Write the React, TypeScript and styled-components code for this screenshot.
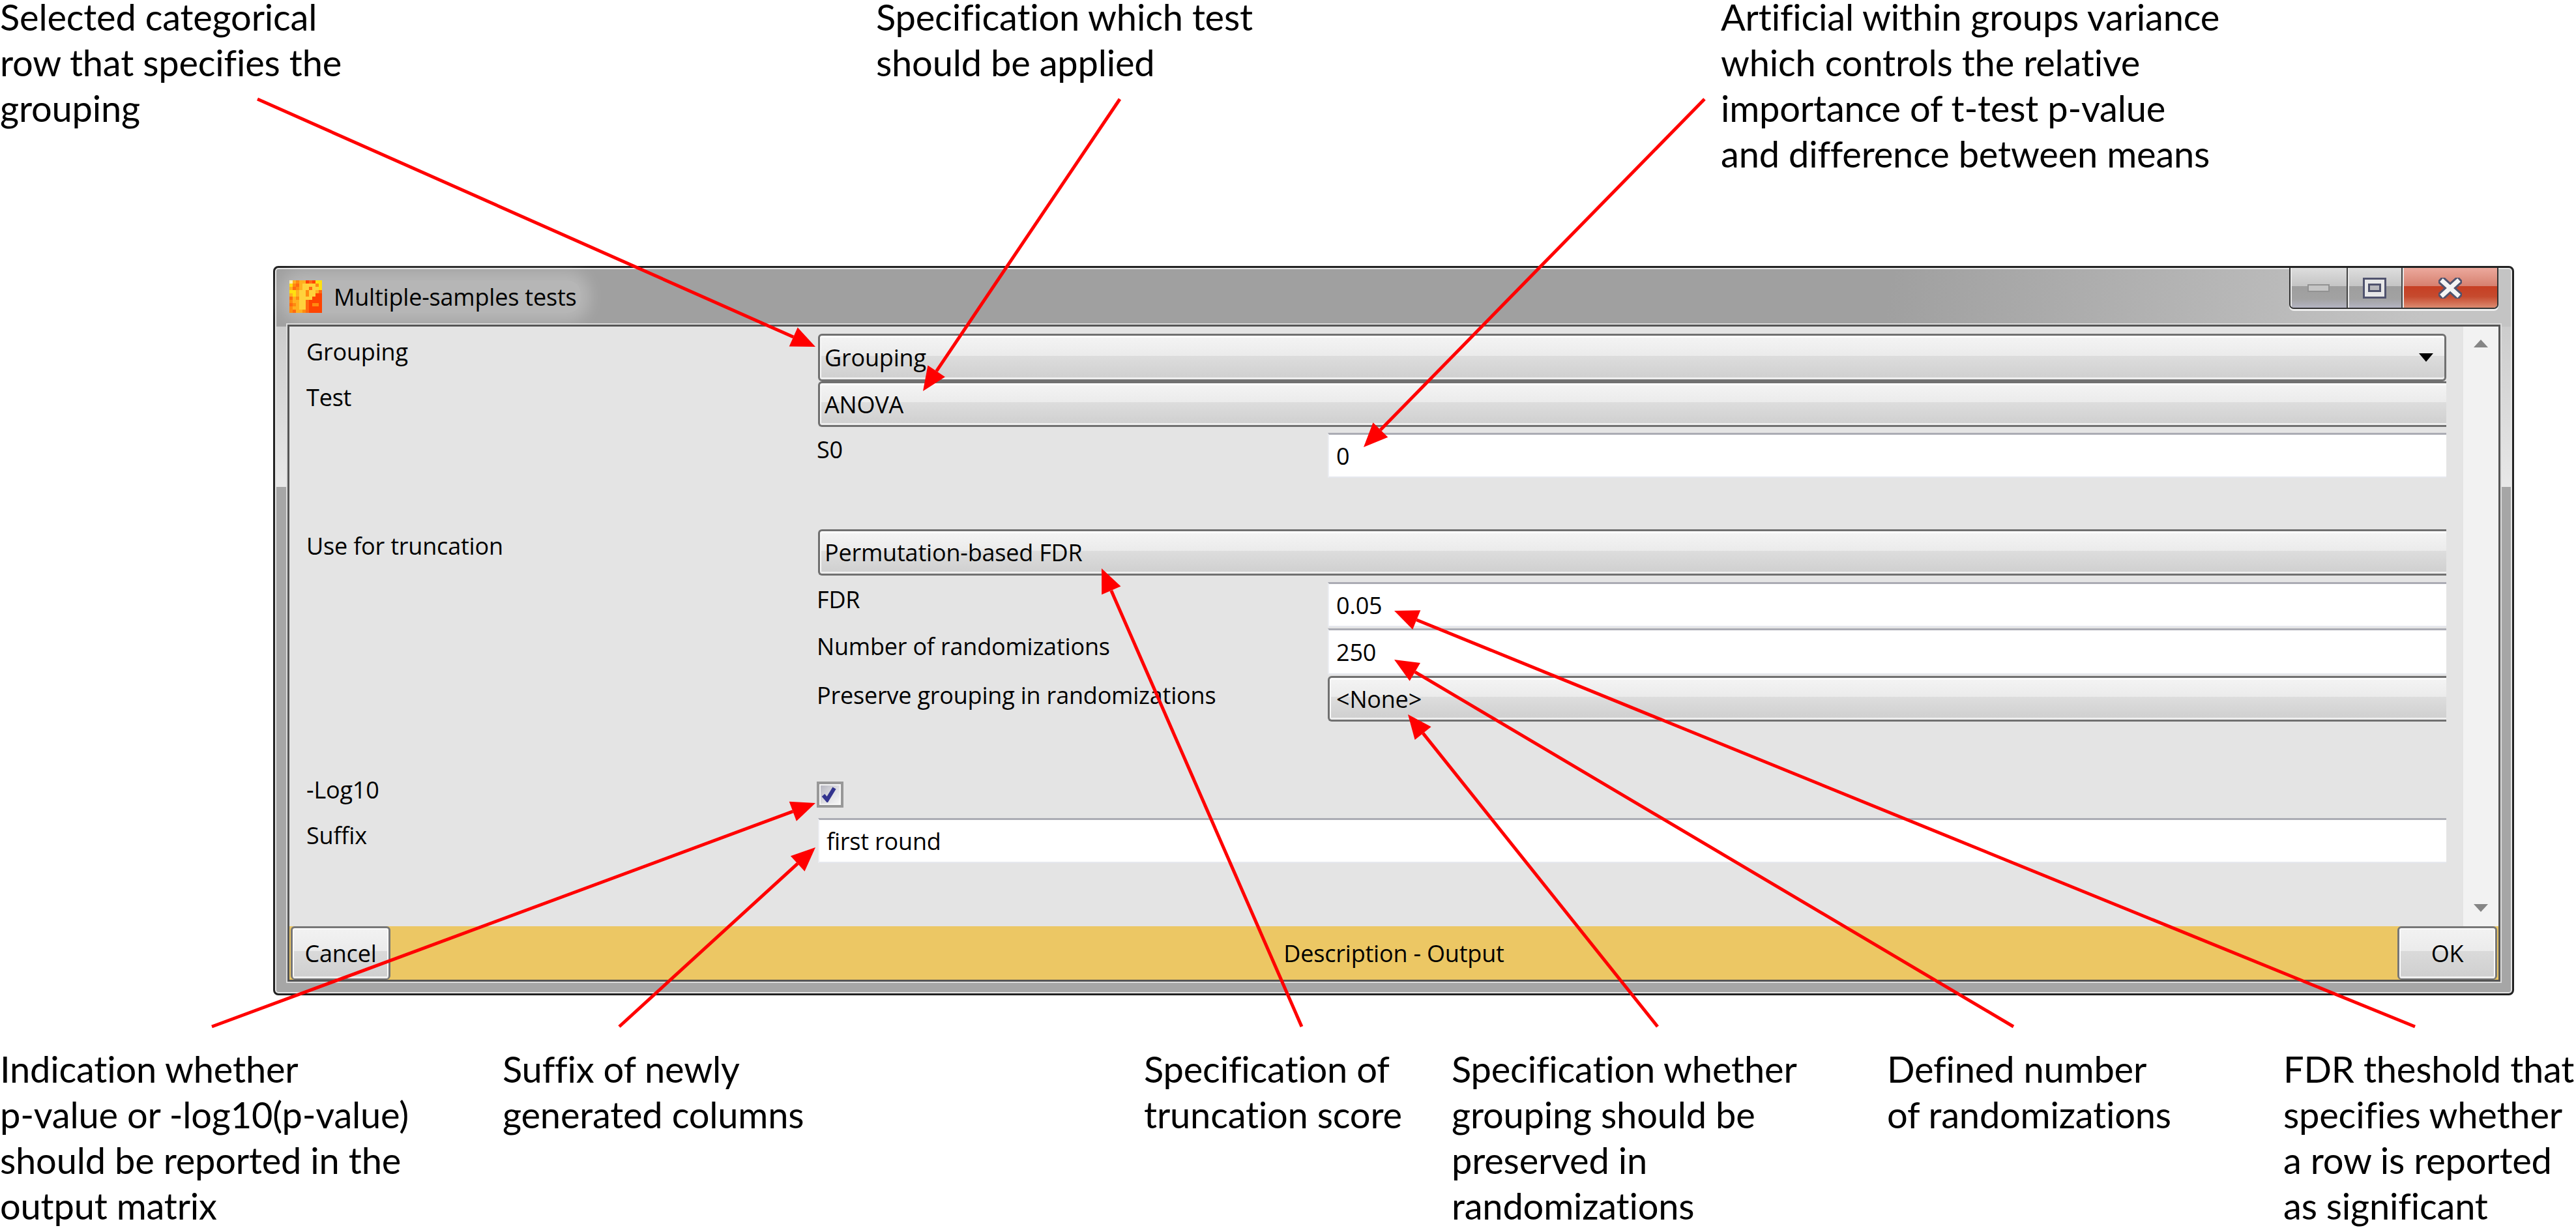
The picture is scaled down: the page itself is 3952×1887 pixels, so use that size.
import React from 'react';
import styled, { createGlobalStyle } from 'styled-components';

const GlobalStyle = createGlobalStyle`
  html, body {
    margin: 0;
    padding: 0;
    background: #fff;
  }
`;

const Page = styled.div`
  position: relative;
  display: flex;
  flex-direction: column;
  width: 3952px;
  height: 1887px;
  overflow: hidden;
  background: #fff;
`;

const TopNotes = styled.div`
  display: grid;
  grid-template-columns: 1344px 1296px 1fr;
  height: 408px;
`;

const BottomNotes = styled.div`
  display: grid;
  grid-template-columns: 771px 984px 472px 668px 608px 1fr;
  margin-top: 87px;
`;

const NoteBlock = styled.div`
  display: flex;
  flex-direction: column;
  gap: 18px;
`;

const NoteLine = styled.div`
  font-family: Lato, 'Open Sans', sans-serif;
  font-size: 56px;
  line-height: 52px;
  letter-spacing: -0.2px;
  color: #000;
  white-space: nowrap;
`;

const Window = styled.div`
  display: flex;
  flex-direction: column;
  box-sizing: border-box;
  width: 3438px;
  height: 1119px;
  margin-left: 419px;
  padding: 0 18px 18px 19px;
  border: 3px solid #222;
  border-radius: 8px;
  box-shadow: inset 0 0 0 2px #e6e6e6;
  background-color: #a2a2a2;
  background-image:
    linear-gradient(100deg, #a0a0a0 72%, #c4c4c4 96%),
    linear-gradient(to bottom, #c2c2c2 0, #e8e8e8 336px, #a6a6a6 336px);
  background-size: 100% 90px, 100% 100%;
  background-repeat: no-repeat;
`;

const TitleBar = styled.div`
  display: flex;
  justify-content: space-between;
  align-items: flex-start;
  flex: none;
  height: 87px;
`;

const TitleGroup = styled.div`
  display: flex;
  align-items: center;
  gap: 18px;
  margin: 19px 0 0 3px;
  height: 50px;
  padding-right: 6px;
  border-radius: 20px;
  background: rgba(255, 255, 255, 0.24);
  box-shadow: 0 0 22px 14px rgba(255, 255, 255, 0.24);
`;

const TitleText = styled.span`
  font-family: 'Open Sans', sans-serif;
  font-size: 36px;
  letter-spacing: -0.2px;
  color: #000;
  white-space: nowrap;
`;

const Controls = styled.div`
  display: flex;
  margin-right: 3px;
  height: 61px;
  border: 2px solid #333;
  border-top: none;
  border-radius: 0 0 7px 7px;
  overflow: hidden;
  box-shadow: 0 3px 0 #eee;
`;

const ControlButton = styled.div<{ $width: number; $close?: boolean }>`
  display: flex;
  align-items: center;
  justify-content: center;
  box-sizing: border-box;
  width: ${({ $width }) => $width}px;
  border-right: 2px solid #444;
  background: ${({ $close }) =>
    $close
      ? 'linear-gradient(to bottom, #eca99d 0, #d6806f 46%, #c63f24 46%, #c64a2e 72%, #dc8a70 100%)'
      : 'linear-gradient(to bottom, #dedede 0, #c4c4c4 46%, #9e9e9e 46%, #a2a2a2 78%, #b4b4c2 100%)'};
  box-shadow: inset 2px 0 0 #e8e8e8;

  &:last-child {
    border-right: none;
  }
`;

const Body = styled.div`
  display: flex;
  flex-direction: column;
  flex: 1;
  min-height: 0;
  border: 3px solid #555;
  background: #e4e4e4;
  box-shadow: 0 0 0 2px #dcdcdc;
`;

const Main = styled.div`
  display: flex;
  flex: 1;
  min-height: 0;
`;

const Form = styled.div`
  display: flex;
  flex-direction: column;
  flex: 1;
  padding: 11px 26px 0 26px;
`;

const Row = styled.div<{ $gap?: number; $height: number; $nested?: boolean }>`
  display: grid;
  grid-template-columns: ${({ $nested }) => ($nested ? '784px 1fr' : '785px 1fr')};
  height: ${({ $height }) => $height}px;
  margin-top: ${({ $gap }) => $gap ?? 0}px;
  margin-left: ${({ $nested }) => ($nested ? '783px' : '0')};
`;

const Label = styled.div<{ $top: number }>`
  margin-top: ${({ $top }) => $top}px;
  font-family: 'Open Sans', sans-serif;
  font-size: 36px;
  line-height: 40px;
  letter-spacing: -0.2px;
  color: #000;
  white-space: nowrap;
`;

const Combo = styled.div<{ $closed?: boolean; $inset?: number }>`
  display: flex;
  align-items: center;
  justify-content: space-between;
  box-sizing: border-box;
  height: 100%;
  padding: 0 17px 0 ${({ $inset }) => $inset ?? 7}px;
  border: 3px solid #707070;
  border-right-width: ${({ $closed }) => ($closed ? '3px' : '0')};
  border-radius: ${({ $closed }) => ($closed ? '6px' : '6px 0 0 6px')};
  background: linear-gradient(to bottom, #f4f4f4 0, #ebebeb 46%, #dddddd 46%, #cfcfcf 100%);
  box-shadow: inset 0 3px 0 #fcfcfc, inset 0 -3px 0 #eeeeee, inset 2px 0 0 #f8f8f8;
  font-family: 'Open Sans', sans-serif;
  font-size: 36px;
  letter-spacing: -0.2px;
  color: #000;
  white-space: nowrap;
`;

const ComboArrow = styled.span`
  width: 0;
  height: 0;
  border-left: 11px solid transparent;
  border-right: 11px solid transparent;
  border-top: 13px solid #000;
`;

const TextField = styled.div`
  display: flex;
  align-items: center;
  box-sizing: border-box;
  height: 100%;
  padding-left: 11px;
  border-top: 3px solid #abacb4;
  border-left: 2px solid #eceef2;
  border-bottom: 2px solid #e6e8ee;
  background: #fff;
  font-family: 'Open Sans', sans-serif;
  font-size: 36px;
  letter-spacing: -0.2px;
  color: #000;
`;

const CheckBox = styled.div`
  box-sizing: border-box;
  width: 41px;
  height: 40px;
  margin-left: -2px;
  padding: 2px;
  border: 4px solid #989898;
  background: #f6f6f6;
`;

const CheckFill = styled.div`
  display: flex;
  height: 100%;
  background: linear-gradient(135deg, #b6b6c0 0, #e0e0e4 55%, #f6f6f6 100%);
`;

const ScrollBar = styled.div`
  display: flex;
  flex-direction: column;
  align-items: center;
  justify-content: space-between;
  flex: none;
  box-sizing: border-box;
  width: 54px;
  padding: 20px 0 22px;
  background: #f2f2f2;
`;

const ScrollArrow = styled.span<{ $up?: boolean }>`
  width: 0;
  height: 0;
  border-left: 11px solid transparent;
  border-right: 11px solid transparent;
  ${({ $up }) =>
    $up ? 'border-bottom: 12px solid #858585;' : 'border-top: 12px solid #858585;'}
`;

const StatusBar = styled.div`
  display: flex;
  align-items: stretch;
  flex: none;
  height: 82px;
  padding: 0 2px;
  background: #ecc764;
`;

const StatusText = styled.div`
  display: flex;
  align-items: center;
  justify-content: center;
  flex: 1;
  font-family: 'Open Sans', sans-serif;
  font-size: 36px;
  letter-spacing: -0.2px;
  color: #000;
`;

const Button = styled.div`
  display: flex;
  align-items: center;
  justify-content: center;
  box-sizing: border-box;
  width: 153px;
  border: 3px solid #777;
  border-bottom-width: 2px;
  border-radius: 6px;
  background: linear-gradient(to bottom, #f2f2f2 0, #ebebeb 46%, #dadada 46%, #cfcfcf 100%);
  box-shadow: inset 0 2px 0 #fcfcfc, inset 0 -3px 0 #f0f0f0, inset 2px 0 0 #fafafa, inset -2px 0 0 #fafafa;
  font-family: 'Open Sans', sans-serif;
  font-size: 36px;
  letter-spacing: -0.2px;
  color: #000;
`;

const ArrowLayer = styled.svg`
  position: absolute;
  top: 0;
  left: 0;
  pointer-events: none;
`;

const LOGO_COLORS: Record<string, string> = {
  w: '#ffeeaa',
  a: '#ffb020',
  o: '#ff8a10',
  m: '#ff6a10',
  r: '#ff4400',
  y: '#ffe010',
  p: '#ffd23c',
};

const LOGO_ROWS = [
  'waoaarmryy',
  'yomappppoy',
  'amoappmppy',
  'yyappoppam',
  'ayappopprr',
  'maopppprrr',
  'oaappmrrrr',
  'moappmroor',
  'oaappmrrrr',
  'omaaomrrrr',
];

const Logo = () => (
  <svg width={50} height={50} viewBox="0 0 10 10" shapeRendering="crispEdges">
    {LOGO_ROWS.map((row, y) =>
      row.split('').map((c, x) => (
        <rect key={`${x}-${y}`} x={x} y={y} width={1} height={1} fill={LOGO_COLORS[c]} />
      )),
    )}
  </svg>
);

const MinimizeIcon = () => (
  <svg width={34} height={12} viewBox="0 0 34 12">
    <rect x={1} y={1} width={32} height={10} fill="#c6c6c6" stroke="#929292" strokeWidth={2} />
  </svg>
);

const MaximizeIcon = () => (
  <svg width={36} height={32} viewBox="0 0 36 32">
    <rect x={1.5} y={1.5} width={33} height={29} fill="#e8e8e8" stroke="#50536e" strokeWidth={3} />
    <rect x={9.5} y={10.5} width={17} height={10} fill="#b8b8bc" stroke="#50536e" strokeWidth={3} />
  </svg>
);

const CloseIcon = () => (
  <svg width={36} height={32} viewBox="0 0 36 32">
    <path d="M7 6 L29 26 M29 6 L7 26" stroke="#50536e" strokeWidth={13} strokeLinecap="square" />
    <path d="M7 6 L29 26 M29 6 L7 26" stroke="#f4f4f4" strokeWidth={7} strokeLinecap="square" />
  </svg>
);

const CheckMark = () => (
  <svg width={25} height={26} viewBox="0 0 25 26">
    <path d="M4 15 L10 22 L21 4" fill="none" stroke="#33348f" strokeWidth={6} />
  </svg>
);

type ArrowProps = { x1: number; y1: number; x2: number; y2: number };

const Arrow = ({ x1, y1, x2, y2 }: ArrowProps) => {
  const len = Math.hypot(x2 - x1, y2 - y1);
  const ux = (x2 - x1) / len;
  const uy = (y2 - y1) / len;
  const bx = x2 - ux * 37;
  const by = y2 - uy * 37;
  const px = -uy * 16;
  const py = ux * 16;
  return (
    <g>
      <line x1={x1} y1={y1} x2={bx} y2={by} stroke="#ff0000" strokeWidth={5} />
      <polygon points={`${x2},${y2} ${bx + px},${by + py} ${bx - px},${by - py}`} fill="#ff0000" />
    </g>
  );
};

const ARROWS: ArrowProps[] = [
  { x1: 395, y1: 152, x2: 1251, y2: 532 },
  { x1: 1718, y1: 152, x2: 1416, y2: 600 },
  { x1: 2615, y1: 152, x2: 2092, y2: 686 },
  { x1: 1997, y1: 1575, x2: 1690, y2: 872 },
  { x1: 2543, y1: 1575, x2: 2160, y2: 1096 },
  { x1: 3089, y1: 1575, x2: 2139, y2: 1012 },
  { x1: 3705, y1: 1575, x2: 2139, y2: 937 },
  { x1: 325, y1: 1575, x2: 1251, y2: 1232 },
  { x1: 950, y1: 1575, x2: 1251, y2: 1300 },
];

const Note = ({ lines }: { lines: string[] }) => (
  <NoteBlock>
    {lines.map((line) => (
      <NoteLine key={line}>{line}</NoteLine>
    ))}
  </NoteBlock>
);

export default function App() {
  return (
    <Page>
      <GlobalStyle />
      <TopNotes>
        <Note lines={['Selected categorical', 'row that specifies the', 'grouping']} />
        <Note lines={['Specification which test', 'should be applied']} />
        <Note
          lines={[
            'Artificial within groups variance',
            'which controls the relative',
            'importance of t-test p-value',
            'and difference between means',
          ]}
        />
      </TopNotes>

      <Window>
        <TitleBar>
          <TitleGroup>
            <Logo />
            <TitleText>Multiple-samples tests</TitleText>
          </TitleGroup>
          <Controls>
            <ControlButton $width={88}>
              <MinimizeIcon />
            </ControlButton>
            <ControlButton $width={84}>
              <MaximizeIcon />
            </ControlButton>
            <ControlButton $width={145} $close>
              <CloseIcon />
            </ControlButton>
          </Controls>
        </TitleBar>

        <Body>
          <Main>
            <Form>
              <Row $height={73}>
                <Label $top={8}>Grouping</Label>
                <Combo $closed>
                  Grouping
                  <ComboArrow />
                </Combo>
              </Row>
              <Row $height={70}>
                <Label $top={5}>Test</Label>
                <Combo>ANOVA</Combo>
              </Row>
              <Row $nested $gap={9} $height={69}>
                <Label $top={6}>S0</Label>
                <TextField>0</TextField>
              </Row>
              <Row $gap={79} $height={71}>
                <Label $top={6}>Use for truncation</Label>
                <Combo>Permutation-based FDR</Combo>
              </Row>
              <Row $nested $gap={10} $height={69}>
                <Label $top={7}>FDR</Label>
                <TextField>0.05</TextField>
              </Row>
              <Row $nested $gap={2} $height={71}>
                <Label $top={8}>Number of randomizations</Label>
                <TextField>250</TextField>
              </Row>
              <Row $nested $gap={2} $height={70}>
                <Label $top={10}>Preserve grouping in randomizations</Label>
                <Combo $inset={10}>&lt;None&gt;</Combo>
              </Row>
              <Row $gap={92} $height={39}>
                <Label $top={-7}>-Log10</Label>
                <CheckBox>
                  <CheckFill>
                    <CheckMark />
                  </CheckFill>
                </CheckBox>
              </Row>
              <Row $gap={17} $height={69}>
                <Label $top={7}>Suffix</Label>
                <TextField>first round</TextField>
              </Row>
            </Form>
            <ScrollBar>
              <ScrollArrow $up />
              <ScrollArrow />
            </ScrollBar>
          </Main>
          <StatusBar>
            <Button>Cancel</Button>
            <StatusText>Description - Output</StatusText>
            <Button>OK</Button>
          </StatusBar>
        </Body>
      </Window>

      <BottomNotes>
        <Note
          lines={[
            'Indication whether',
            'p-value or -log10(p-value)',
            'should be reported in the',
            'output matrix',
          ]}
        />
        <Note lines={['Suffix of newly', 'generated columns']} />
        <Note lines={['Specification of', 'truncation score']} />
        <Note
          lines={['Specification whether', 'grouping should be', 'preserved in', 'randomizations']}
        />
        <Note lines={['Defined number', 'of randomizations']} />
        <Note
          lines={['FDR theshold that', 'specifies whether', 'a row is reported', 'as significant']}
        />
      </BottomNotes>

      <ArrowLayer width={3952} height={1887} viewBox="0 0 3952 1887">
        {ARROWS.map((a) => (
          <Arrow key={`${a.x1}-${a.y1}`} {...a} />
        ))}
      </ArrowLayer>
    </Page>
  );
}
